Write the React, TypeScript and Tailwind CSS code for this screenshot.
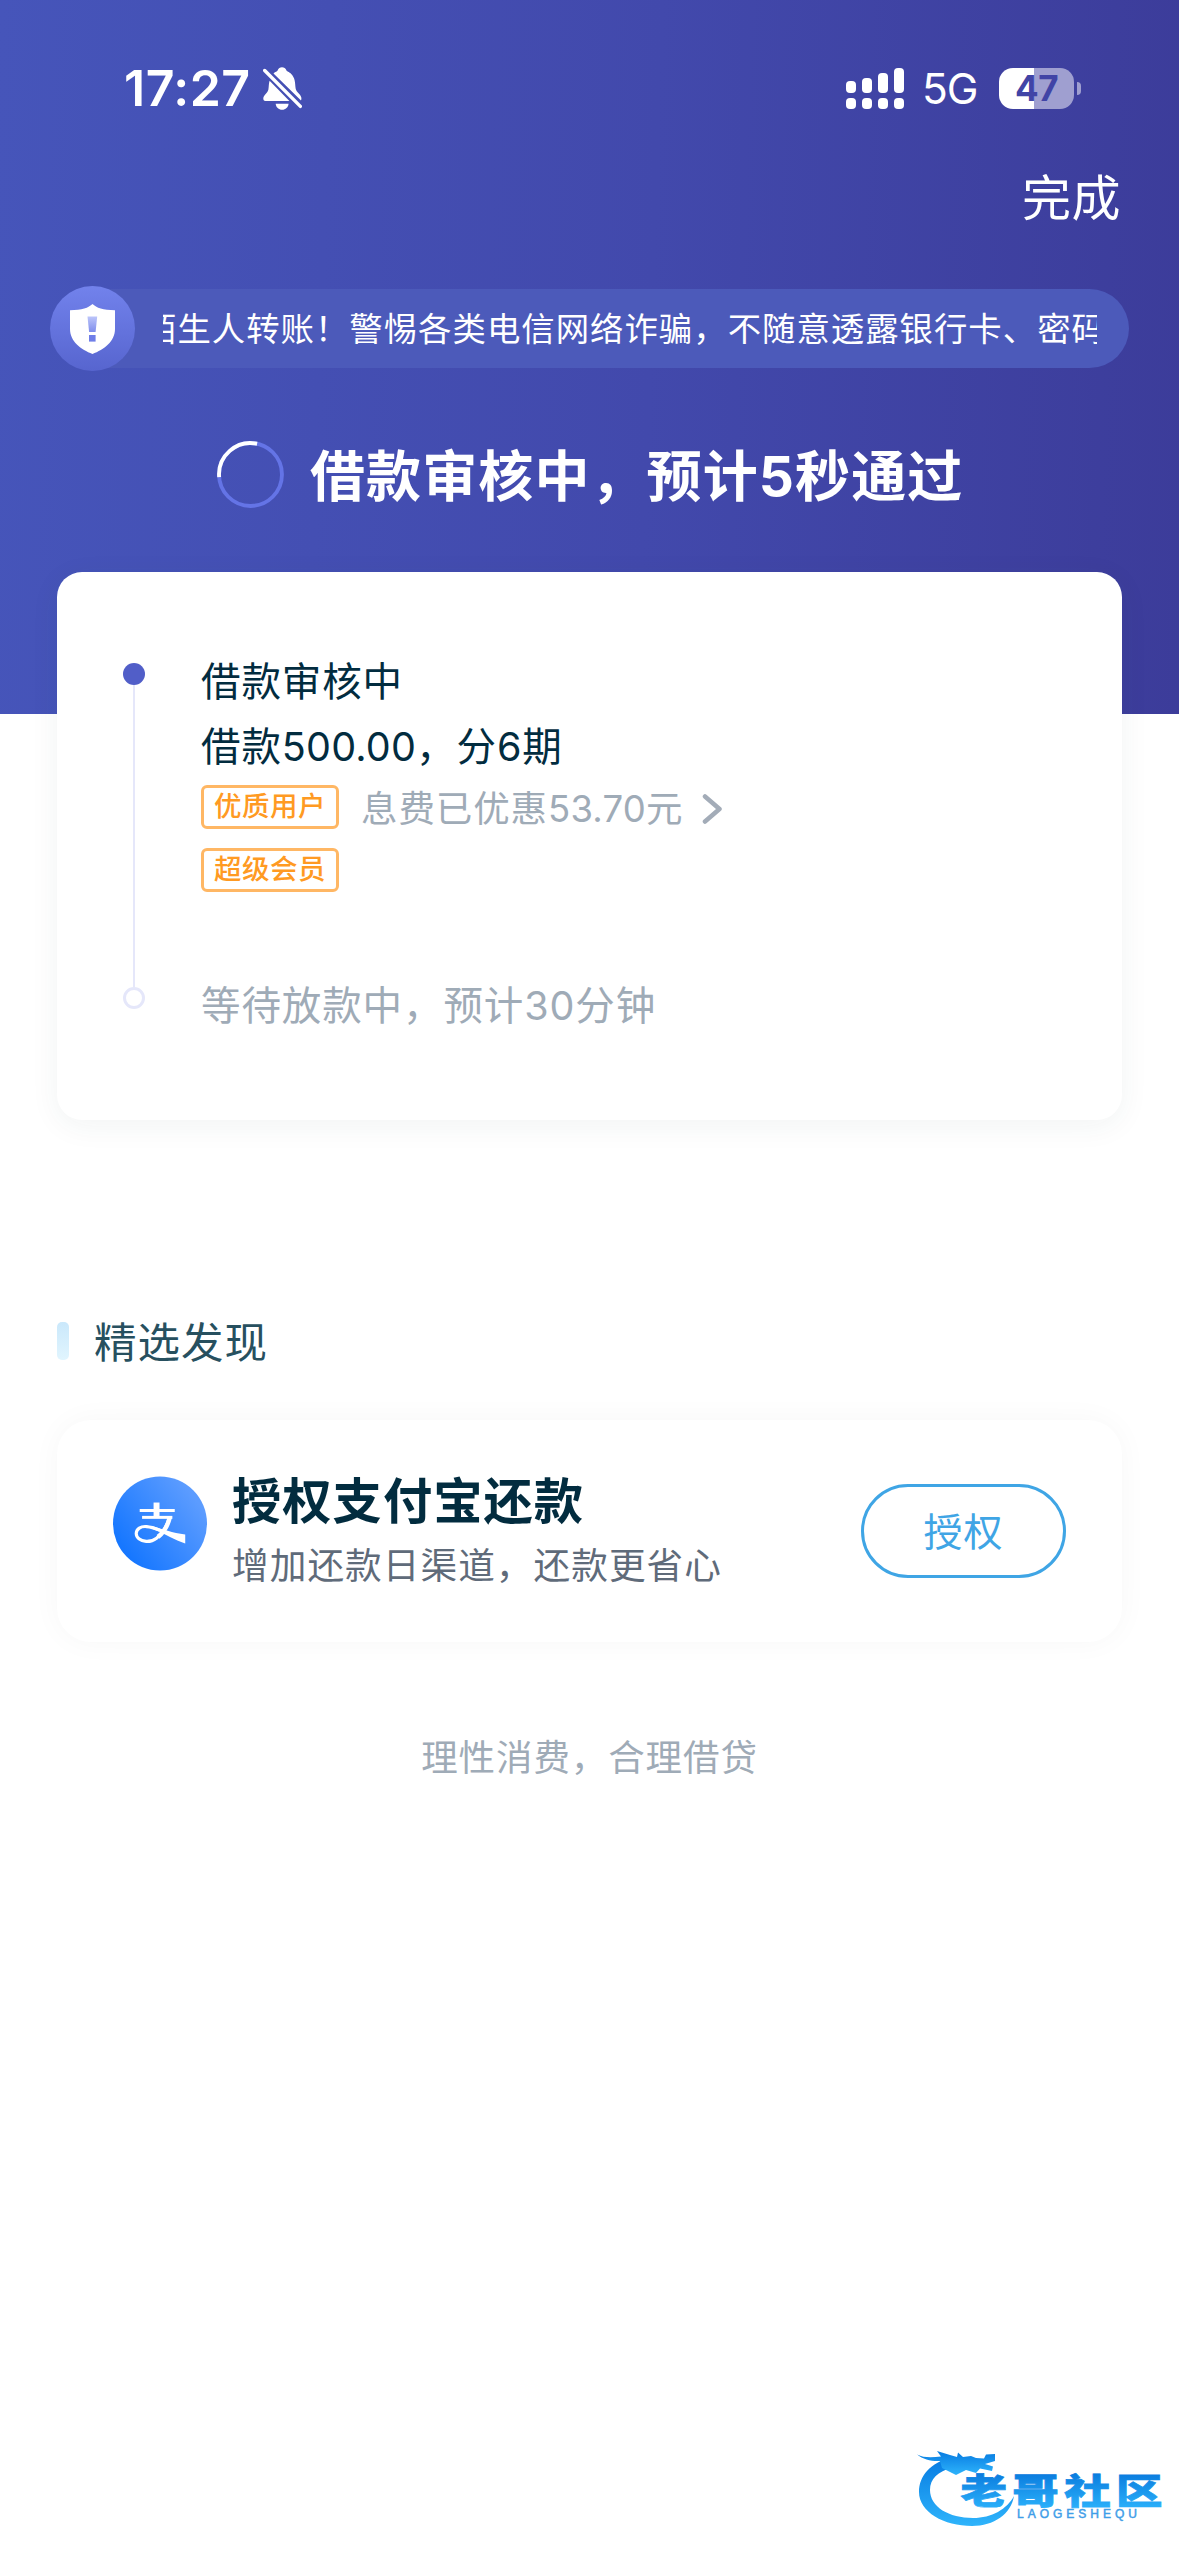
import React from "react";

const notice = "陌生人转账！警惕各类电信网络诈骗，不随意透露银行卡、密码";

const signalBars = ["h-[12px]", "h-[15px]", "h-[20px]", "h-[25px]"];

function BellOff() {
  return (
    <svg width="39" height="43" viewBox="0 0 39 43" fill="white">
      <path d="M10.5 6.5C12.500 4.800 14 4.600 14.600 3.600C15.400 1.300 17 .3 19 .3s3.700 1 4.500 3.300C24.200 4.800 27 5 29.500 8.600C32.600 13 32 17.500 32.700 21.800C33.400 25.600 37.800 27.300 38.300 30.600C38.500 31.700 38.500 32.600 38 33.600Z" />
      <path d="M6.600 13.800L26.400 34H2.400C.9 34 .2 32.800.3 31.300C.6 28.200 4.600 26.400 5.400 22.600C5.900 19.800 5.700 16.500 6.600 13.800Z" />
      <path d="M12.700 36.700H25.600C25.200 40.300 22.600 42.700 19.100 42.700S13 40.300 12.700 36.700Z" />
      <path d="M1.700 3.500L37.400 39.400" stroke="white" strokeWidth="3.400" strokeLinecap="round" />
    </svg>
  );
}

function Shield() {
  return (
    <svg width="45" height="50" viewBox="0 0 45 50">
      <defs>
        <linearGradient id="mark" x1="0" y1="0" x2="0" y2="1">
          <stop offset="0" stopColor="#bcc5fa" />
          <stop offset="1" stopColor="#7f8dec" />
        </linearGradient>
      </defs>
      <path d="M22.500 0C26.500 3.800 33 6.200 45 6.200V25C45 37.500 34 45.500 22.500 50C11 45.500 0 37.500 0 25V6.200C12 6.200 18.500 3.800 22.500 0Z" fill="white" />
      <path d="M17.500 12.500H27.200L25.600 28H19.100Z" fill="url(#mark)" />
      <rect x="19" y="31" width="6.600" height="6.600" fill="#6f7ee8" />
    </svg>
  );
}

function Spinner() {
  return (
    <svg width="67" height="67" viewBox="0 0 66 66" fill="none" strokeWidth="3.800">
      <circle cx="33" cy="33" r="31" stroke="#6474e6" />
      <path d="M2.100 35.500A31 31 0 0 1 39.500 2.700" stroke="white" />
    </svg>
  );
}

function AlipayIcon() {
  return (
    <svg width="94" height="95" viewBox="0 0 95 95" fill="none">
      <defs>
        <linearGradient id="ali" x1="0.1" y1="0.75" x2="0.85" y2="0.2">
          <stop offset="0" stopColor="#1677ff" />
          <stop offset="1" stopColor="#5c9cff" />
        </linearGradient>
      </defs>
      <circle cx="47.500" cy="47.500" r="47.500" fill="url(#ali)" />
      <g stroke="white">
        <path d="M44 26.300V41" strokeWidth="6" />
        <path d="M27 34.300H62.400" strokeWidth="3" />
        <path d="M29.400 41.300H60" strokeWidth="3" />
        <path d="M57 41.300C54.500 50 49.500 58 44 62.300C40.500 65 37 65.800 33.500 65.600C27.500 65.200 23.300 61.800 23.500 57.300C23.700 53 28 50 34 50.600C39 51 43 52.600 47 54.200" strokeWidth="3.200" />
        <path d="M57.500 41C55.500 49 51.500 56.500 45.500 61" strokeWidth="4.500" />
      </g>
      <path d="M40 50.200C50 53 60 57 73 58.600V67.800C62 63.800 54 58.700 40 53Z" fill="white" />
    </svg>
  );
}

function CommunityLogo() {
  return (
    <svg width="260" height="90" viewBox="0 0 260 90">
      <defs>
        <linearGradient id="ring" x1="0" y1="0" x2="0" y2="1">
          <stop offset="0.1" stopColor="#0a80e4" />
          <stop offset="1" stopColor="#2fb4fb" />
        </linearGradient>
        <linearGradient id="word" x1="0" y1="0" x2="0" y2="1">
          <stop offset="0.15" stopColor="#0878dc" />
          <stop offset="0.9" stopColor="#2bb1fb" />
        </linearGradient>
      </defs>
      <g fill="url(#ring)">
        <path d="M42 17C20 23 9 36 9 52C9 72 34 86 62 86C84 86 101 74 104 56C97 69 82 78 63 78C39 78 20 67 20 50C20 39 28 31 42 28Z" />
        <path d="M7 14.500C14 18 22 17.500 31 16.500L27 11L40 15L47 17L48 12.500L53 17L61 16L66 18L74 18.500L76 14.500L85 14L85 21L75 24L83 26.500L82 31L70 28.500L66 33L56 30L46 35L40 32L32 28L30 21C22 21.500 13 19.500 7 14.500Z" />
      </g>
      <g transform="translate(50.500 64) scale(1 0.76)">
        <text
          x="0"
          y="0"
          textLength="202"
          fontSize="46.500"
          fontWeight="900"
          fontFamily="'Noto Sans CJK SC', sans-serif"
          fill="url(#word)"
          stroke="url(#word)"
          strokeWidth="1"
        >
          老哥社区
        </text>
      </g>
      <text
        x="107"
        y="78"
        textLength="120"
        fontSize="12"
        fontFamily="'Liberation Sans', sans-serif"
        fill="#3f9ee8"
        stroke="#3f9ee8"
        strokeWidth="0.500"
      >
        LAOGESHEQU
      </text>
    </svg>
  );
}

function StatusBar() {
  return (
    <div className="flex h-[176px] items-center justify-between pl-[124px] pr-[98px]">
      <div className="flex items-center gap-[13px]">
        <span className="w-[126px] whitespace-nowrap text-[50px] font-semibold leading-none tracking-[0.500px]">17:27</span>
        <BellOff />
      </div>
      <div className="flex items-center">
        <div className="flex h-[41px] items-end gap-[6px]">
          {signalBars.map((height) => (
            <div key={height} className="flex flex-col gap-[5px]">
              <span className={`w-[10px] rounded-[4px] bg-white ${height}`} />
              <span className="h-[11px] w-[10px] rounded-[4px] bg-white" />
            </div>
          ))}
        </div>
        <span className="ml-[18px] w-[57px] whitespace-nowrap pt-[3px] text-[42.500px] leading-none tracking-[-1px]">5G</span>
        <div className="ml-[20px] flex h-[41px] w-[75px] items-center justify-center rounded-[14px] bg-[linear-gradient(to_right,#fff_35px,#9f9fd0_35px)] text-[35px] font-bold leading-none tracking-[-0.5px] text-[#4144a6]">
          47
        </div>
        <span className="ml-[3px] h-[13px] w-[4px] rounded-r-full bg-[#9f9fd0]" />
      </div>
    </div>
  );
}

function Tag({ label }: { label: string }) {
  return (
    <span className="flex h-[44px] w-[138px] items-center justify-center rounded-[6px] border-[3px] border-[#ffb764] text-[27.500px] font-medium leading-none tracking-[0.500px] text-[#ff9a22]">
      {label}
    </span>
  );
}

function ProgressCard() {
  return (
    <section className="mx-[57px] -mt-[142px] flex h-[548px] rounded-[25px] bg-white pl-[66px] shadow-[0_6px_30px_rgba(40,70,60,0.06)]">
      <div className="flex w-[22px] flex-col items-center pt-[91px]">
        <span className="size-[22px] shrink-0 rounded-full bg-[#515ec8]" />
        <span className="h-[302px] w-[2px] bg-[#e5e7fa]" />
        <span className="size-[22px] shrink-0 rounded-full border-[3px] border-[#e5e7fa]" />
      </div>
      <div className="ml-[56px] pt-[78px] text-[39.500px] tracking-[0.900px] text-[#022c3f]">
        <p className="h-[65px] leading-[65px]">借款审核中</p>
        <p className="h-[65px] leading-[65px]">
          借款<span className="tracking-[0.200px]">500.00</span>，分6期
        </p>
        <div className="mt-[5px] flex h-[44px] items-center">
          <Tag label="优质用户" />
          <span className="ml-[22px] pt-[4px] text-[36.500px] leading-none tracking-[0.900px] text-[#9fabb7]">
            息费已优惠<span className="tracking-[0.200px]">53.70</span>元
          </span>
          <svg className="ml-[19px] mt-[4px]" width="22" height="30" viewBox="0 0 22 30" fill="none">
            <path d="M3 2.500L17.500 15L3 27.500" stroke="#a3acb8" strokeWidth="4.500" strokeLinecap="round" strokeLinejoin="round" />
          </svg>
        </div>
        <div className="mt-[19px] flex">
          <Tag label="超级会员" />
        </div>
        <p className="mt-[82px] h-[65px] leading-[65px] text-[#9fabb7]">等待放款中，预计30分钟</p>
      </div>
    </section>
  );
}

export default function App() {
  return (
    <div className="flex min-h-[2556px] w-[1179px] flex-col bg-white font-[Inter,'Noto_Sans_CJK_SC',sans-serif]">
      <header className="h-[714px] bg-[linear-gradient(92deg,#4655ba_0%,#4249ac_55%,#3c3c9a_100%)] text-white">
        <StatusBar />
        <div className="flex h-[42px] items-center justify-end pr-[58px] pt-[2px] text-[49px] leading-none tracking-[0.500px]">完成</div>

        <div className="mt-[68px] flex h-[85px] items-center px-[50px]">
          <div className="z-10 flex size-[85px] shrink-0 items-center justify-center rounded-full bg-linear-to-b from-[#7282ec] to-[#5765cf]">
            <Shield />
          </div>
          <div className="-ml-[78px] flex h-[79px] flex-1 items-center rounded-full bg-[#4c5aba] pl-[106px] pr-[32px]">
            <div className="w-[934px] overflow-hidden">
              <p className="-ml-[20px] w-[980px] whitespace-nowrap text-[33.400px] leading-[60px] tracking-[1px]">{notice}</p>
            </div>
          </div>
        </div>

        <div className="mt-[70px] flex h-[67px] items-center pl-[217px]">
          <Spinner />
          <h1 className="ml-[26px] whitespace-nowrap pt-[4px] text-[55px] font-bold leading-none tracking-[1.100px]">借款审核中，预计5秒通过</h1>
        </div>
      </header>

      <ProgressCard />

      <div className="mt-[180px] flex h-[84px] items-center pl-[57px]">
        <span className="-mt-[3px] h-[38px] w-[12px] rounded-[5px] bg-linear-to-b from-[#cae8fb] to-[#e1f5fe]" />
        <h2 className="ml-[25px] pt-[2px] text-[42.500px] leading-none tracking-[1px] text-[#27505f]">精选发现</h2>
      </div>

      <section className="mx-[57px] mt-[36px] flex h-[222px] rounded-[34px] bg-white pl-[56px] pr-[56px] shadow-[0_0_30px_rgba(0,0,0,0.035)]">
        <div className="pt-[56px]">
          <AlipayIcon />
        </div>
        <div className="ml-[25px] flex-1 pt-[48px]">
          <h3 className="h-[65px] text-[49.300px] font-bold leading-[66px] tracking-[1px] text-[#022c3f]">授权支付宝还款</h3>
          <p className="h-[66px] text-[36.700px] leading-[66px] tracking-[1px] text-[#5f6b7a]">增加还款日渠道，还款更省心</p>
        </div>
        <button className="mt-[64px] h-[94px] w-[205px] rounded-full border-[3px] border-[#3fa5e5] text-[39px] leading-none tracking-[1px] text-[#3fa5e5]">
          授权
        </button>
      </section>

      <p className="mt-[86px] text-center text-[36.500px] leading-[60px] tracking-[0.900px] text-[#9fabb7]">理性消费，合理借贷</p>

      <div className="mb-[26px] mr-[9px] mt-auto flex justify-end">
        <CommunityLogo />
      </div>
    </div>
  );
}
